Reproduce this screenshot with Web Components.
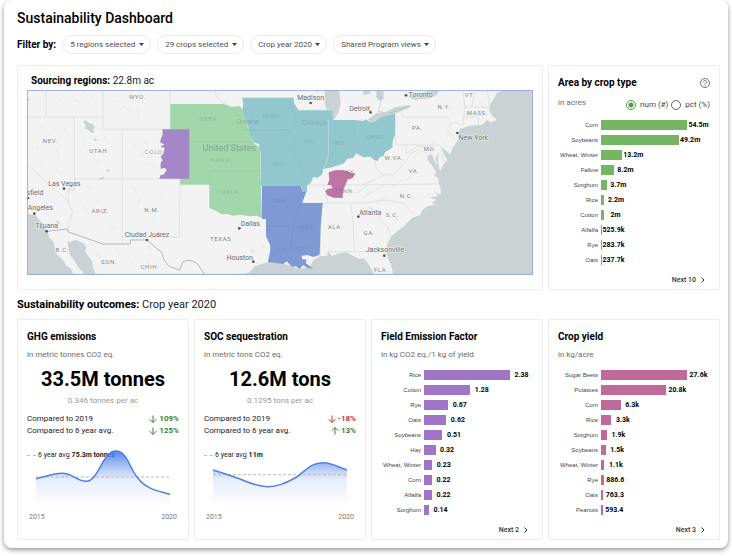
<!DOCTYPE html>
<html lang="en">
<head>
<meta charset="utf-8">
<title>Sustainability Dashboard</title>
<style>
  body { margin: 0; background: #fff; font-family: Roboto, "Liberation Sans", sans-serif; color: #000; }
</style>
</head>
<body>
<sustain-dashboard></sustain-dashboard>

<script>
const define = (name, html, setup) => {
  const tpl = document.createElement('template');
  tpl.innerHTML = html;
  customElements.define(name, class extends HTMLElement {
    constructor() {
      super();
      this.attachShadow({ mode: 'open' }).append(tpl.content.cloneNode(true));
    }
    connectedCallback() {
      if (setup && !this.ready) { this.ready = true; setup(this, this.shadowRoot); }
    }
  });
};

/* Pill-shaped drop-down */
define('filter-select', `
<style>
  :host { display: inline-grid; align-items: center; }
  select, svg { grid-area: 1 / 1; }
  select { appearance: none; height: 19px; padding: 0 14px 0 7px; border: 1px solid #eaeaea; border-radius: 10px;
    background: #fff; font: 400 8px/16px Roboto, sans-serif; color: #505050; }
  svg { justify-self: end; margin-right: 7px; width: 5px; height: 3px; pointer-events: none; }
</style>
<select><option></option></select>
<svg viewBox="0 0 5 3"><path d="M0 0h5L2.500 3z" fill="#444"/></svg>`,
(el, root) => {
  root.querySelector('select').setAttribute('aria-label', el.getAttribute('label'));
  root.querySelector('option').textContent = el.getAttribute('value');
});

/* Bordered card with heading, optional tools and footer */
define('panel-card', `
<style>
  :host { display: flex; flex-direction: column; box-sizing: border-box; padding: 10px 9px 2px; border: 1px solid #ededed; border-radius: 2px; background: #fff; }
  header { display: flex; justify-content: space-between; align-items: center; height: 14px; }
  h3 { margin: 0; font: 700 10px/14px Roboto, sans-serif; white-space: nowrap; }
  .sub { display: flex; justify-content: space-between; align-items: flex-start; margin: var(--sub-gap, 5px) 0 9px; font-size: 8px; line-height: 12px; color: #6b6b6b; }
</style>
<header><h3></h3><slot name="action"></slot></header>
<div class="sub"><span class="unit"></span><slot name="controls"></slot></div>
<slot></slot>`,
(el, root) => {
  root.querySelector('h3').textContent = el.getAttribute('heading');
  root.querySelector('.unit').textContent = el.getAttribute('unit');
});

define('help-button', `
<style>
  :host { display: block; }
  button { display: block; padding: 0; border: 0; background: none; }
  svg { display: block; width: 10px; height: 10px; }
</style>
<button aria-label="Help"><svg viewBox="0 0 20 20" fill="none" stroke="#555" stroke-width="1.600">
<circle cx="10" cy="10" r="9"/><path d="M7 8a3 3 0 1 1 4.500 2.600C10.400 11.300 10 11.800 10 13"/><path d="M10 14.500v1.800"/></svg></button>`);

define('unit-toggle', `
<style>
  :host { display: flex; gap: 3px; padding-top: 2px; color: #444; font-size: 8px; line-height: 12px; }
  label { display: flex; align-items: center; gap: 4px; }
  input { appearance: none; box-sizing: border-box; width: 10px; height: 10px; margin: 0; border: 1px solid #666; border-radius: 50%; }
  input:checked { border-color: #4a9e46; background: radial-gradient(circle, #4a9e46 2px, #fff 3px); }
</style>
<label><input type="radio" name="unit" checked>num (#)</label>
<label><input type="radio" name="unit">pct (%)</label>`);

/* Horizontal bars; rows are "label:amount:text" separated by "|" */
define('bar-chart', `
<style>
  :host { display: flex; flex-direction: column; flex: 1; }
  .rows { display: grid; gap: 5px; }
  .row { display: grid; grid-template-columns: 40px 1fr; column-gap: 3px; align-items: center; height: 10px; }
  .name { justify-self: end; white-space: nowrap; font: 400 6px/10px "Liberation Sans", sans-serif; color: #444; }
  .track { display: flex; align-items: center; }
  .bar { height: 10px; background: var(--bar); min-width: 1px; width: calc((100% - 23px) * var(--share)); }
  .value { width: 23px; text-align: center; white-space: nowrap; font-size: 7px; line-height: 8px; font-weight: 700; }
  button { display: flex; align-items: center; gap: 3px; margin: auto 3px 0 auto; padding: 0; border: 0; background: none; font: 500 7px/14px Roboto, sans-serif; color: #333; }
  svg { width: 4px; height: 6px; margin: 0 2px; }
</style>
<div class="rows"></div>
<button><span class="more"></span><svg viewBox="0 0 4 6" fill="none" stroke="#333"><path d="M.5.5 3 3 .5 5.500"/></svg></button>`,
(el, root) => {
  const data = el.getAttribute('rows').split('|').map(r => r.split(':'));
  const max = Number(data[0][1]);
  root.querySelector('.more').textContent = el.getAttribute('more');
  for (const [name, amount, text] of data) {
    const row = document.createElement('div');
    row.className = 'row';
    row.innerHTML = '<span class="name"></span><span class="track"><span class="bar"></span><span class="value"></span></span>';
    row.querySelector('.name').textContent = name;
    row.querySelector('.bar').style.setProperty('--share', amount / max);
    row.querySelector('.value').textContent = text;
    root.querySelector('.rows').append(row);
  }
});

define('change-row', `
<style>
  :host { display: flex; justify-content: space-between; align-items: center; font-size: 8px; line-height: 12px; color: #222; }
  .pct { display: flex; align-items: center; gap: 2px; font-weight: 700; color: #3d8530; }
  :host([tone="bad"]) .pct { color: #d9332e; }
  svg { width: 8px; height: 8px; }
  :host([dir="up"]) svg { rotate: 180deg; }
</style>
<slot></slot>
<span class="pct"><svg viewBox="0 0 8 8" fill="none" stroke="currentColor"><path d="M4 .5v7M.7 4.200 4 7.500l3.300-3.300"/></svg><span class="num"></span></span>`,
(el, root) => { root.querySelector('.num').textContent = el.getAttribute('value'); });

define('kpi-figure', `
<style>
  :host { display: block; margin-top: -3px; text-align: center; }
  strong { display: block; font-size: 20px; line-height: 24px; font-weight: 700; white-space: nowrap; }
  span { display: block; margin: 4px 0 6px; font-size: 8px; line-height: 12px; color: #999; }
</style>
<strong></strong><span></span>`,
(el, root) => {
  root.querySelector('strong').textContent = el.getAttribute('total');
  root.querySelector('span').textContent = el.getAttribute('rate');
});

define('trend-chart', `
<style>
  :host { display: block; margin-top: 13px; }
  .legend { display: flex; align-items: center; gap: 2px; font-size: 7px; line-height: 10px; color: #222; white-space: nowrap; }
  .legend i { width: 9px; border-top: 1px dashed #bbb; }
  svg { display: block; position: relative; width: 100%; height: auto; margin-top: -12px; }
  .years { display: flex; justify-content: space-between; padding: 4px 2px 0; font-size: 7px; line-height: 10px; color: #777; }
</style>
<div class="legend"><i></i><span>6 year avg</span><b></b></div>
<svg viewBox="27 448 152 60" fill="none">
  <defs><linearGradient id="fade" gradientUnits="userSpaceOnUse" x1="0" y1="449" x2="0" y2="507">
    <stop offset="0" stop-color="#4d80e8"/><stop offset=".25" stop-color="#4d80e8" stop-opacity=".55"/>
    <stop offset=".52" stop-color="#4d80e8" stop-opacity=".14"/><stop offset="1" stop-color="#4d80e8" stop-opacity="0"/></linearGradient></defs>
  <path class="area" fill="url(#fade)"/>
  <path class="avg" stroke="#b9b9b9" stroke-dasharray="3 2"/>
  <path class="line" stroke="#4d80e8" stroke-width="1.500"/>
</svg>
<div class="years"><span>2015</span><span>2020</span></div>`,
(el, root) => {
  const d = el.getAttribute('curve');
  root.querySelector('b').textContent = el.getAttribute('average');
  root.querySelector('.area').setAttribute('d', d + 'V507H36Z');
  root.querySelector('.line').setAttribute('d', d);
  root.querySelector('.avg').setAttribute('d', 'M36 ' + el.getAttribute('level') + 'H170');
});

define('region-map', `
<style>
  :host { display: block; }
  svg { display: block; width: 100%; height: auto; }
  text { text-anchor: middle; font-family: Roboto, sans-serif; }
  .water { fill: #cad2d3; }
  .border { fill: none; stroke: #d6d9d9; stroke-width: 2; }
  .nation { fill: none; stroke: #b4b8b8; stroke-width: 3; stroke-linejoin: round; }
  .state { font-size: 18px; fill: #858989; letter-spacing: 2px; stroke: #f2f3f2; stroke-width: 3px; paint-order: stroke; }
  .under { font-size: 18px; letter-spacing: 2px; fill: #5b7b78; fill-opacity: .34; }
  .city { font-size: 21px; fill: #6c7072; stroke: #f2f3f2; stroke-width: 3px; paint-order: stroke; }
  .dot { fill: #555; }
  .texture { fill: none; stroke: #eaecec; stroke-width: 4; stroke-linecap: round; }
</style>
<svg viewBox="21 91 1518 554" role="img" aria-label="Sourcing regions in the United States">
  <rect x="21" y="91" width="1518" height="554" fill="#f2f3f2"/>
  <path class="texture" d="M110 112l10 8M160 120l18 10M210 105l12 14M280 130l14-6M310 140l20 12M350 150l8 16M60 190l8 14M100 200l4 18M130 215l8-12M50 260l6 12M110 270l6 16M190 250l8 16M225 300l10 10M250 240l6-14M340 250l6 20M370 240l14 16M355 290l16-10M390 310l10 12M60 300l14 14M110 330l10 14M200 380l16 8M230 420l14 14M190 440l14 12M340 380l10 18M360 420l-8 16M420 400l6 18M400 470l10 10M270 500l16 6M230 580l14 14M290 570l8 16M330 600l12 12M380 600l10 16M1160 360l20-14M1120 380l24-18M1070 430l26-20M1180 300l16-20M1230 270l12-24M1270 250l20-30"/>
  <g class="water">
    <path d="M21 462 45 466 58 482 75 498 82 516 88 535 101 546 107 580 125 598 134 607 138 618 152 626 160 645H21Z"/>
    <path d="M142 545 150 548 166 541 190 550 198 562 196 576 205 590 216 603 219 625 228 645H196L176 624 160 598 149 585Z"/>
    <path d="M190 185 197 182 205 189 218 194 224 204 220 211 223 218 215 220 205 211 195 207 197 198Z"/>
    <path d="M222 236l9 2-2 6-5-1zM258 335l8-7 5 4-9 6zM236 356l12-5 6 3-12 7zM106 480l8 4 6 10-6-1zM141 388l12-2v3l-10 2zM21 118l10-1-1 5-9 1z"/>
    <path d="M915 91H957L962 128 955 160 942 180 936 181 938 153 920 149 914 132Z"/>
    <path d="M1030 91H1048L1052 101 1030 107ZM1070 91H1091V118L1078 123 1068 112Z"/>
    <path d="M1044 179 1070 160 1100 156 1125 143 1171 136 1172 142 1130 160 1105 165 1080 178 1055 188Z"/>
    <path d="M1165 115 1190 102 1240 91H1256L1250 106 1230 116 1185 120Z"/>
    <path d="M662 645 690 638 704 620 744 607 792 612 835 628 870 622 880 600 900 590 922 588 925 574 934 589 955 582 978 577 1000 589 1018 597 1032 596 1045 612 1055 630 1062 645Z"/>
    <path d="M1120 645 1113 615 1101 588 1098 568 1103 550 1115 530 1132 515 1152 500 1175 475 1200 467 1207 452 1222 440 1244 436 1236 428 1250 421 1228 412 1254 410 1246 398 1262 405 1262 385 1256 372 1255 355 1242 347 1249 338 1237 318 1226 306 1222 290 1234 284 1240 300 1252 318 1248 296 1256 276 1254 308 1260 335 1270 315 1282 300 1272 285 1265 263 1280 275 1290 285 1300 262 1316 238 1315 219 1340 211 1366 206 1350 212 1316 221 1320 208 1350 198 1388 195 1402 180 1411 188 1430 182 1428 178 1416 168 1407 150 1412 130 1425 112 1430 101 1447 91H1540V645Z"/>
  </g>
  <path class="border" d="M78 91V172M21 172H249M249 91V209H450V91M163 172V392L145 388V425M163 358H480M307 209V553M480 358 478 532H385M21 314 143 424 158 455 150 480 147 500 143 515M585 91 588 105 605 128 632 141M815 115 818 130 835 152H930M860 376H1000L1255 373M850 430H1050M992 430 1000 500 1003 576H922L926 586M901 430V586M1005 576H1095M1030 412 1060 395 1094 373M1045 430 1075 422H1105L1150 432 1180 465M1055 440 1085 485 1103 500 1112 532M1127 165V256H1258M1147 163V172H1282L1292 195 1280 210 1298 226 1304 240M1328 91 1335 140 1329 198 1312 190 1290 190M1335 142H1390L1410 145M1329 172H1375V195M1355 142 1362 112 1370 91M1402 91 1408 140M1264 256 1268 305H1282M1155 262 1160 282 1188 262 1220 260 1238 290 1255 332M1065 305 1070 330 1092 346 1120 345 1145 320 1175 280 1195 270 1220 280M1092 346 1035 374M910 376 925 430M1010 400 1040 380"/>
  <path class="nation" d="M80 515 142 508 145 517 249 553H331V541H381L400 558 425 578 432 600 445 618 478 632 490 605 510 602 530 610 553 642"/>
  <path class="nation" d="M1075 91 1083 125 1075 155 1092 158M1105 163 1170 138" stroke-opacity=".5"/>
  <g class="texture" style="stroke:#cad2d3;stroke-width:2"><path d="M692 568l10 6M725 558l8 6M696 575l4 4M385 560l8 8M1045 440l12 10M1128 475l8 8"/></g>
  <path fill="#a2d6ab" d="M451 133H610L632 141 660 140 668 150 676 170 683 200 691 227 702 250 716 262 722 280V345L726 475 710 468 690 470 660 465 640 468 620 462 605 464 590 455 568 445V375H481V357L451 209Z"/>
  <path fill="#92c7cd" d="M666 114H820L823 132 836 152H938V181H1002L1030 184 1038 179 1048 186 1062 187 1085 172 1125 161V225L1118 245V262L1108 270 1096 277 1090 290 1078 293 1074 304 1062 301 1052 291 1030 293 1020 287 1008 281 1000 294 982 297 972 311 955 317 940 322 920 326 910 328 906 345 892 354 880 352 872 370 862 376 860 395 848 397 844 378H723V280L716 264 718 254 702 248 690 225 683 195 674 170 667 150 670 132Z"/>
  <path fill="none" stroke="#b6dbdf" stroke-width="3" d="M925 181V290L920 308 910 328"/>
  <path fill="none" stroke="#88bec5" stroke-width="2" d="M672 210H805L822 232 812 270 835 300 840 325 862 352M1002 181V240M820 152 830 185 812 215"/>
  <path fill="none" stroke="#9ad0a5" stroke-width="2" d="M508 246H700M568 333H722M568 333V375"/>
  <path fill="#7e99d4" d="M726 378H842L848 397 860 393 850 420 847 430H908L902 500 899 585 880 592 862 586 845 588 846 598 860 600 857 610 880 628 862 624 850 616 838 628 828 620 815 621 800 605 790 613 744 607 751 570 750 555 738 530V478H726Z"/>
  <path fill="none" stroke="#7690cb" stroke-width="2" d="M738 498H820L816 530 812 565H865M847 430 825 470 820 498"/>
  <path fill="#a586c8" d="M427 209H508V357H418L421 347 432 344 440 330 434 325 422 327V308L428 304 422 290 430 282 434 264 421 262 434 254 421 249 422 238 428 225Z"/>
  <path fill="#bf75a3" d="M926 338 945 332 970 331 990 338 1006 342 998 355 982 360 978 372 970 390 968 415 940 414 922 407 916 395 922 388 938 385 932 376 922 376 928 360Z"/>
  <g class="state">
    <text x="352" y="117">WYO.</text><text x="91" y="250">NEV.</text><text x="235" y="281">UTAH</text>
    <text x="241" y="461">ARIZ.</text><text x="396" y="457">N.M.</text><text x="127" y="578">B.C.</text><text x="267" y="612">SON.</text><text x="390" y="628">CHIH.</text>
    <text x="602" y="544">TEXAS</text><text x="946" y="509">ALA.</text><text x="1048" y="525">GA.</text><text x="1117" y="471">S.C.</text>
    <text x="1160" y="414">N.C.</text><text x="1182" y="339">VA.</text><text x="1122" y="300">W.VA.</text><text x="1230" y="273">MD.</text><text x="1192" y="212">PA.</text>
    <text x="1272" y="148">N.Y.</text><text x="1372" y="165">MASS.</text><text x="1084" y="637">FLA.</text><text x="1350" y="113">VT.</text>
  </g>
  <g class="under">
    <text x="404" y="283" style="fill-opacity:.7">COLO.</text><text x="568" y="183">NEBR.</text><text x="604" y="308">KANS.</text><text x="634" y="403">OKLA.</text>
    <text x="754" y="174">IOWA</text><text x="873" y="249">ILL.</text><text x="959" y="256">IND.</text><text x="1064" y="238">OHIO</text>
    <text x="778" y="320">MO.</text><text x="783" y="431">ARK.</text><text x="860" y="509">MISS.</text><text x="788" y="574">LA.</text>
    <text x="974" y="400" style="fill-opacity:.7">TENN.</text><text x="992" y="343" style="fill-opacity:.7">KY.</text>
  </g>
  <g class="under" style="letter-spacing:normal">
    <text x="628" y="273" style="font-size:27px;fill-opacity:.5">United States</text>
    <text x="683" y="192" style="font-size:21px">Omaha</text><text x="883" y="196" style="font-size:21px">Chicago</text>
  </g>
  <g class="city">
    <text x="133" y="378">Las Vegas</text><text x="45" y="407">sfield</text><text x="61" y="452">Angeles</text><text x="80" y="504">Tijuana</text>
    <text x="381" y="531">Ciudad Juárez</text><text x="691" y="500">Dallas</text><text x="659" y="601">Houston</text><text x="872" y="122">Madison</text>
    <text x="1019" y="153">Detroit</text><text x="1202" y="113">Toronto</text><text x="1360" y="240">New York</text><text x="1051" y="467">Atlanta</text><text x="1095" y="577">Jacksonville</text>
  </g>
  <g class="dot">
    <circle cx="132" cy="387" r="4"/><circle cx="43" cy="462" r="4"/><circle cx="80" cy="515" r="4"/><circle cx="24" cy="415" r="4"/><circle cx="381" cy="541" r="4"/>
    <circle cx="658" cy="506" r="4"/><circle cx="700" cy="606" r="4"/><circle cx="872" cy="130" r="4"/><circle cx="1052" cy="158" r="4"/>
    <circle cx="1158" cy="107" r="4"/><circle cx="1312" cy="220" r="4"/><circle cx="1015" cy="471" r="4"/><circle cx="1093" cy="588" r="4"/>
  </g>
  <rect x="22" y="92" width="1516" height="552" fill="none" stroke="#8eaae2" stroke-width="3"/>
</svg>`);

define('sustain-dashboard', `
<style>
  :host { display: block; margin: 0 4px 8px; }
  main { padding: 8px 8px 8px 13px; border-radius: 8px; background: #fff; box-shadow: 0 2px 5px rgba(0, 0, 0, .42); }
  h1 { margin: 0; font-size: 14px; line-height: 20px; font-weight: 500; }
  .filters { display: flex; align-items: center; gap: 6px; margin: 7px 0 11px; }
  .filters b { font-size: 10px; line-height: 18px; font-weight: 700; }
  h2 { margin: 7px 0; font-size: 11px; line-height: 15px; font-weight: 700; }
  h2 span { font-weight: 400; color: #222; }
  .grid { display: grid; grid-template-columns: repeat(4, 1fr); gap: 5px; }
  .top { min-height: 225px; }
  .low { min-height: 221px; }
  .map { grid-column: span 3; box-sizing: border-box; padding: 8px 9px; border: 1px solid #ededed; border-radius: 2px; }
  .map p { margin: 0 0 2px; padding-left: 4px; font-size: 10px; line-height: 14px; color: #222; }
  .map p b { color: #000; }
</style>
<main>
  <h1>Sustainability Dashboard</h1>
  <div class="filters"><b>Filter by:</b>
    <filter-select label="Regions" value="5 regions selected"></filter-select>
    <filter-select label="Crops" value="29 crops selected"></filter-select>
    <filter-select label="Crop year" value="Crop year 2020"></filter-select>
    <filter-select label="Program" value="Shared Program views"></filter-select>
  </div>
  <div class="grid top">
    <section class="map"><p><b>Sourcing regions:</b> 22.8m ac</p><region-map></region-map></section>
    <panel-card heading="Area by crop type" unit="in acres" style="--sub-gap:7px">
      <help-button slot="action"></help-button>
      <unit-toggle slot="controls"></unit-toggle>
      <bar-chart style="--bar:#76b663" more="Next 10" rows="Corn:54.5:54.5m|Soybeans:49.2:49.2m|Wheat, Winter:13.2:13.2m|Fallow:8.2:8.2m|Sorghum:3.7:3.7m|Rice:2.2:2.2m|Cotton:2:2m|Alfalfa:.5259:525.9k|Rye:.2837:283.7k|Oats:.2377:237.7k"></bar-chart>
    </panel-card>
  </div>
  <h2>Sustainability outcomes: <span>Crop year 2020</span></h2>
  <div class="grid low">
    <panel-card heading="GHG emissions" unit="in metric tonnes CO2 eq.">
      <kpi-figure total="33.5M tonnes" rate="0.346 tonnes per ac"></kpi-figure>
      <change-row dir="down" value="109%">Compared to 2019</change-row>
      <change-row dir="down" value="125%">Compared to 6 year avg.</change-row>
      <trend-chart average="75.3m tonnes" level="477" curve="M36 478.700C45 477 53 473.300 62 473.300C73 473.300 77 481.300 86 481.300C99 481.300 102 451 116 451C127 451 130 469 137 477C146 489 155 490 170 494.300"></trend-chart>
    </panel-card>
    <panel-card heading="SOC sequestration" unit="in metric tons CO2 eq.">
      <kpi-figure total="12.6M tons" rate="0.1295 tons per ac"></kpi-figure>
      <change-row dir="down" tone="bad" value="-18%">Compared to 2019</change-row>
      <change-row dir="up" value="13%">Compared to 6 year avg.</change-row>
      <trend-chart average="11m" level="474.700" curve="M36 470C46 473 55 476 63 479C73 483 80 486.700 91 486.700C102 486.700 110 482 118 478C128 472 133 462.700 146 462.700C156 462.700 160 467 170 470"></trend-chart>
    </panel-card>
    <panel-card heading="Field Emission Factor" unit="in kg CO2 eq./1 kg of yield">
      <bar-chart style="--bar:#a074c6" more="Next 2" rows="Rice:2.38:2.38|Cotton:1.28:1.28|Rye:.67:0.67|Oats:.62:0.62|Soybeans:.51:0.51|Hay:.32:0.32|Wheat, Winter:.23:0.23|Corn:.22:0.22|Alfalfa:.22:0.22|Sorghum:.14:0.14"></bar-chart>
    </panel-card>
    <panel-card heading="Crop yield" unit="in kg/acre">
      <bar-chart style="--bar:#c0699b" more="Next 3" rows="Sugar Beets:27.6:27.6k|Potatoes:20.8:20.8k|Corn:6.3:6.3k|Rice:3.3:3.3k|Sorghum:1.9:1.9k|Soybeans:1.5:1.5k|Wheat, Winter:1.1:1.1k|Rye:.8866:886.6|Oats:.7633:763.3|Peanuts:.5934:593.4"></bar-chart>
    </panel-card>
  </div>
</main>`);
</script>
</body>
</html>
